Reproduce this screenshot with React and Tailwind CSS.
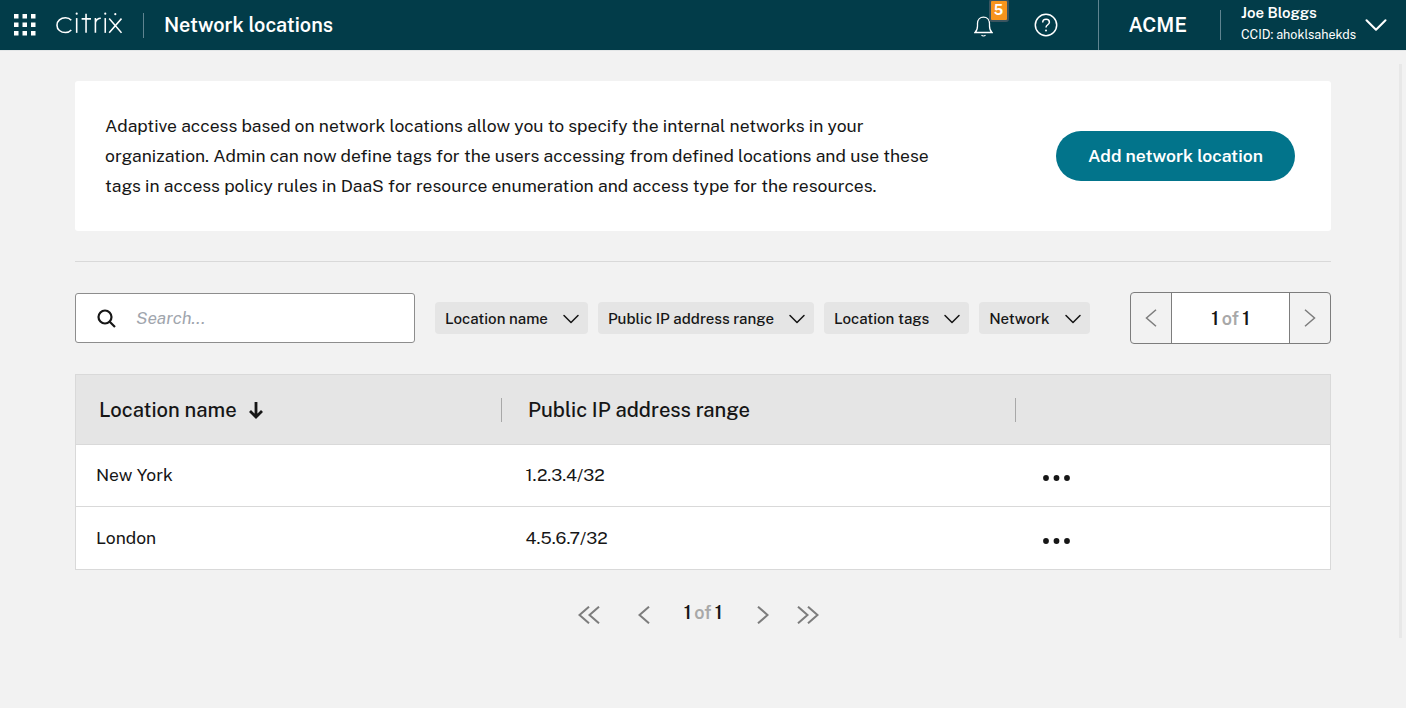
import { ChevronDown } from "lucide-react";

const filters = ["Location name", "Public IP address range", "Location tags", "Network"];

const rows = [
  { name: "New York", range: "1.2.3.4/32", height: "h-[62px]" },
  { name: "London", range: "4.5.6.7/32", height: "h-[63px]" },
];

function AppGrid() {
  const dots = [];
  for (let y = 0; y < 3; y++) {
    for (let x = 0; x < 3; x++) {
      dots.push(<rect key={`${x}-${y}`} x={x * 8.5} y={y * 8.5} width="4.500" height="4.500" fill="#fff" />);
    }
  }
  return (
    <svg width="22" height="22" viewBox="0 0 22 22">
      {dots}
    </svg>
  );
}

function CitrixLogo() {
  return (
    <svg width="66" height="22" viewBox="0 0 67 22" fill="none" stroke="#fff" strokeWidth="1.600">
      <path d="M15.500 8.200C14 6.500 12 5.700 9.700 5.700 4.700 5.700 1 8.700 1 13.200s3.700 7.500 8.700 7.500c2.300 0 4.300-.8 5.800-2.500" />
      <path d="M21 6v15" />
      <path d="M26 6.800h9.500M30.500 1.500V21" />
      <path d="M40 21V6M40 10.500c.8-2.800 2.700-4.300 5.500-4.300" />
      <path d="M50 6v15" />
      <path d="M54 6.500l12.500 14.500M66.500 6.500L54 21" />
      <circle cx="21" cy="1.500" r="1.100" fill="#fff" stroke="none" />
      <circle cx="50" cy="1.500" r="1.100" fill="#fff" stroke="none" />
      <circle cx="60.200" cy="2" r="1.100" fill="#fff" stroke="none" />
    </svg>
  );
}

function Bell() {
  return (
    <svg width="19" height="22" viewBox="0 0 19 22" fill="none" stroke="#fff" strokeWidth="1.300">
      <path d="M1 17.500h17c-1.800-1.600-2.500-3.500-2.500-6.500V8.500c0-3.800-2.500-6.300-6-6.300s-6 2.500-6 6.300V11c0 3-.7 4.900-2.500 6.500z" />
      <path d="M7.500 20.300c.9.700 3.100.7 4 0" />
    </svg>
  );
}

function HelpIcon() {
  return (
    <svg width="24" height="24" viewBox="0 0 24 24" fill="none" stroke="#fff" strokeWidth="1.500">
      <circle cx="12" cy="12" r="10.700" />
      <path d="M8.700 9.500c0-2 1.500-3.200 3.400-3.200s3.300 1.200 3.300 2.900c0 2.600-3.400 2.500-3.400 5.300" />
      <circle cx="12" cy="17.600" r="1" fill="#fff" stroke="none" />
    </svg>
  );
}

function SearchIcon() {
  return (
    <svg width="19" height="19" viewBox="0 0 19 19" fill="none" stroke="#161616" strokeWidth="2.200">
      <circle cx="8" cy="8" r="6.500" />
      <path d="M12.500 12.500l5.500 5.500" />
    </svg>
  );
}

function SortArrow() {
  return (
    <svg width="16" height="18" viewBox="0 0 16 18" fill="none" stroke="#161616" strokeWidth="2.800">
      <path d="M8 1v15M2 10l6 6 6-6" />
    </svg>
  );
}

function MoreDots() {
  return (
    <svg width="28" height="6" viewBox="0 0 28 6" fill="#161616">
      <circle cx="3" cy="3" r="2.900" />
      <circle cx="13.500" cy="3" r="2.900" />
      <circle cx="24" cy="3" r="2.900" />
    </svg>
  );
}

// pager chevrons, the lucide ones are too narrow for these
function PagerLeft({ width = 2 }) {
  return (
    <svg width="12" height="18" viewBox="0 0 12 18" fill="none" stroke="#7d7d7d" strokeWidth={width}>
      <path d="M11 .7L1.500 9 11 17.300" />
    </svg>
  );
}

function PagerRight({ width = 2 }) {
  return (
    <svg width="12" height="18" viewBox="0 0 12 18" fill="none" stroke="#7d7d7d" strokeWidth={width}>
      <path d="M1 .7L10.500 9 1 17.300" />
    </svg>
  );
}

function PagerFirst() {
  return (
    <svg width="22" height="18" viewBox="0 0 22 18" fill="none" stroke="#7d7d7d" strokeWidth="2">
      <path d="M11 .7L1.500 9 11 17.300M21 .7L11.500 9 21 17.300" />
    </svg>
  );
}

function PagerLast() {
  return (
    <svg width="22" height="18" viewBox="0 0 22 18" fill="none" stroke="#7d7d7d" strokeWidth="2">
      <path d="M1 .7L10.500 9 1 17.300M11 .7L20.500 9 11 17.300" />
    </svg>
  );
}

function PageCount({ className }) {
  return (
    <span className={`font-semibold text-[#161616] [word-spacing:-1px] ${className}`}>
      1 <span className="text-[#a8a8a8]">of</span> 1
    </span>
  );
}

export default function App() {
  return (
    <div className="relative h-[708px] overflow-hidden bg-[#f2f2f2] font-['Public_Sans','Inter','Roboto',sans-serif] text-[#161616]">
      <header className="flex h-[51px] items-center border-b border-[#e3e6e7] bg-[#023c49] text-white">
        <div className="ml-[14px] flex">
          <AppGrid />
        </div>
        <div className="ml-[20px] mt-[-4px] flex">
          <CitrixLogo />
        </div>
        <div className="ml-[21px] h-[25px] w-px bg-[#5f8490]" />
        <h1 className="ml-[20px] text-[19.800px] font-semibold">Network locations</h1>

        <div className="ml-auto flex h-full items-center">
          <div className="relative mr-[41px] mt-[2px] flex">
            <Bell />
            <span className="absolute left-[15px] top-[-16px] flex h-[23px] w-[20px] items-center justify-center rounded-[3px] border-2 border-[#3b5560] bg-[#f7941d] text-[14px] font-bold text-white">
              5
            </span>
          </div>
          <HelpIcon />
          <div className="ml-[40px] h-full w-px bg-[#5f8490]" />
          <div className="ml-[30px] text-[20px] font-semibold">ACME</div>
          <div className="ml-[33px] h-[30px] w-px bg-[#5f8490]" />
          <div className="ml-[20px] mt-[-4px] flex w-[116px] flex-col gap-[5px] whitespace-nowrap">
            <span className="text-[15px] font-semibold leading-[18px]">Joe Bloggs</span>
            <span className="text-[12.500px] leading-[16px]">CCID: ahoklsahekds</span>
          </div>
          <ChevronDown className="mr-[11px]" size={38} strokeWidth={1.300} />
        </div>
      </header>

      <main className="px-[75px] pt-[30px]">
        <section className="flex h-[150px] items-center justify-between rounded-[3px] bg-white pl-[30px] pr-[36px]">
          <p className="w-[840px] text-[17.500px] leading-[30px]">
            Adaptive access based on network locations allow you to specify the internal networks in your organization.
            Admin can now define tags for the users accessing from defined locations and use these tags in access policy
            rules in DaaS for resource enumeration and access type for the resources.
          </p>
          <button className="h-[50px] w-[239px] rounded-full bg-[#02748b] text-[17.500px] font-semibold text-white">
            Add network location
          </button>
        </section>

        <hr className="mt-[30px] border-[#d9d9d9]" />

        <div className="mt-[30px] flex items-center">
          <div className="flex h-[50px] w-[340px] items-center rounded-[3px] border border-[#8d8d8d] bg-white pl-[21px]">
            <SearchIcon />
            <input
              placeholder="Search..."
              className="ml-[20px] flex-1 bg-transparent text-[17.500px] italic outline-none placeholder:text-[#a0a5ad]"
            />
          </div>
          <div className="ml-[20px] flex gap-[10px]">
            {filters.map((label) => (
              <div
                key={label}
                className="flex h-[32px] items-center rounded-[4px] bg-[#e5e5e5] pl-[10px] pr-[3px] pt-[2px] text-[15.100px] font-medium"
              >
                {label}
                <ChevronDown className="ml-[9px]" size={28} strokeWidth={1.300} />
              </div>
            ))}
          </div>
          <div className="ml-auto flex h-[52px] w-[201px] rounded-[4px] border border-[#7d7d7d]">
            <div className="flex w-[41px] items-center justify-center border-r border-[#7d7d7d]">
              <PagerLeft width={1.500} />
            </div>
            <div className="flex flex-1 items-center justify-center bg-white">
              <PageCount className="text-[18px]" />
            </div>
            <div className="flex w-[41px] items-center justify-center border-l border-[#7d7d7d]">
              <PagerRight width={1.500} />
            </div>
          </div>
        </div>

        <div className="mt-[30px] border border-[#d9d9d9]">
          <div className="grid h-[69px] grid-cols-[426px_514px_1fr] items-center bg-[#e5e5e5] text-[20.200px] font-medium">
            <div className="flex h-[24px] items-center border-r border-[#a8a8a8] pl-[23px] pt-[2px]">
              Location name
              <span className="ml-[11px] mt-[-2px] flex">
                <SortArrow />
              </span>
            </div>
            <div className="flex h-[24px] items-center border-r border-[#a8a8a8] pl-[26px] pt-[2px]">
              Public IP address range
            </div>
            <div />
          </div>
          {rows.map((row) => (
            <div
              key={row.name}
              className={`grid ${row.height} grid-cols-[449.500px_517.500px_1fr] items-center border-t border-[#d9d9d9] bg-white text-[17.500px]`}
            >
              <div className="pl-[20px]">{row.name}</div>
              <div>{row.range}</div>
              <div className="flex pt-[5px]">
                <MoreDots />
              </div>
            </div>
          ))}
        </div>

        <div className="mt-[30px] flex h-[30px] items-center justify-center pr-[9px]">
          <PagerFirst />
          <span className="ml-[38px] flex">
            <PagerLeft />
          </span>
          <PageCount className="ml-[34px] mr-[35px] mt-[-6px] text-[18px]" />
          <PagerRight />
          <span className="ml-[28px] flex">
            <PagerLast />
          </span>
        </div>
      </main>

      <div className="absolute right-[4px] top-[64px] h-[574px] w-[3px] bg-[#e8e8e8]" />
    </div>
  );
}
